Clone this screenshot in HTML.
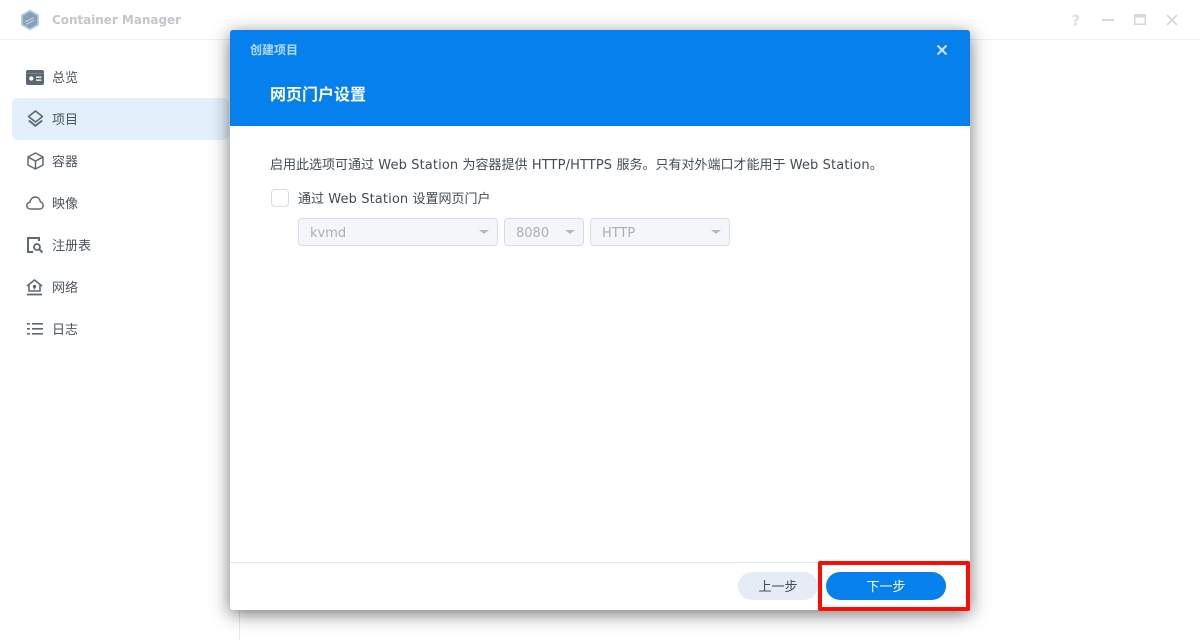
<!DOCTYPE html>
<html lang="zh-CN">
<head>
<meta charset="utf-8">
<title>Container Manager</title>
<style>
html,body{margin:0;padding:0;width:1200px;height:640px;overflow:hidden;background:#fff}
*{box-sizing:border-box}
body{font-family:"DejaVu Sans","Noto Sans CJK SC",sans-serif;font-size:13px;color:#414b55;position:relative}
.abs{position:absolute;white-space:nowrap}
.nav{position:absolute;left:52px;font-size:13px;line-height:18px;color:#414b55;opacity:.95}
.l{letter-spacing:.12px}
svg{position:absolute;overflow:visible}
.sel{position:absolute;top:218px;height:28px;border:1px solid #d5dfea;border-radius:4px;background:#f4f6fa;color:#a9b0b8;font-size:13px;line-height:30px;padding-left:11px}
.sel i{position:absolute;top:11px;width:0;height:0;border-left:5px solid transparent;border-right:5px solid transparent;border-top:4px solid #b4bac1}
</style>
</head>
<body>
<!-- window chrome -->
<div class="abs" style="left:0;top:39px;width:1200px;height:1px;background:#f0f2f5"></div>
<div class="abs" style="left:239px;top:40px;width:1px;height:600px;background:#e6e9ed"></div>

<svg style="left:19px;top:9px" width="22" height="22" viewBox="0 0 22 22">
<path d="M11 0.5 20 5.700V16.300L11 21.500 2 16.300V5.700Z" fill="#a9d4ef"/>
<path d="M11 2.500 18.200 6.800V15.200L11 19.500 3.800 15.200V6.800Z" fill="#8b9db9"/>
<path d="M6 13 15 8.500M7 15.500 15.500 11" stroke="#b7d2e4" stroke-width="1.200" fill="none"/>
</svg>
<div class="abs" style="left:52px;top:11px;font-size:12px;line-height:18px;font-weight:700;color:#c3c6ca;letter-spacing:-.04px">Container Manager</div>

<svg style="left:1070px;top:12px" width="14" height="16" viewBox="0 0 14 16"><text x="1.500" y="13.500" font-family="DejaVu Sans" font-size="15" font-weight="700" fill="#dfe1e4">?</text></svg>
<svg style="left:1102px;top:19px" width="12" height="2" viewBox="0 0 12 2"><rect width="12" height="2" fill="#d6d8db"/></svg>
<svg style="left:1134px;top:14px" width="12" height="11" viewBox="0 0 12 11"><rect x=".75" y=".75" width="10.500" height="9.500" fill="none" stroke="#d6d8db" stroke-width="1.500"/><rect x="0" y="0" width="12" height="3.500" fill="#d6d8db"/></svg>
<svg style="left:1166px;top:14px" width="12" height="12" viewBox="0 0 12 12"><path d="M1 1 11 11M11 1 1 11" stroke="#d6d8db" stroke-width="1.800" fill="none"/></svg>

<!-- sidebar -->
<div class="abs" style="left:12px;top:98px;width:217px;height:42px;border-radius:6px;background:#e3f0fc"></div>

<svg style="left:26px;top:70px" width="18" height="15" viewBox="0 0 18 15"><rect width="18" height="15" rx="2" fill="#5c6670"/><rect x="0" y="3" width="18" height="1" fill="#7c858e"/><circle cx="5.300" cy="8.500" r="2.100" fill="#fff"/><rect x="10" y="6.500" width="5.500" height="1.300" fill="#fff"/><rect x="10" y="9.500" width="5.500" height="1.300" fill="#fff"/></svg>
<div class="nav" style="top:70px">总览</div>

<svg style="left:27px;top:110px" width="17" height="17" viewBox="0 0 17 17" fill="none" stroke="#5f6973" stroke-width="1.600"><path d="M8.500 1 15.500 6.500 8.500 12 1.500 6.500Z" stroke-linejoin="round"/><path d="M1.800 10.500 8.500 15.800 15.200 10.500" stroke-width="1.900"/></svg>
<div class="nav" style="top:112px">项目</div>

<svg style="left:27px;top:152px" width="17" height="18" viewBox="0 0 17 18" fill="none" stroke="#5f6973" stroke-width="1.500"><path d="M8.500 1 16 5V13L8.500 17 1 13V5Z" stroke-linejoin="round"/><path d="M1.500 5.300 8.500 9 15.500 5.300M8.500 9V16.500"/></svg>
<div class="nav" style="top:154px">容器</div>

<svg style="left:26px;top:196px" width="18" height="14" viewBox="0 0 18 14" fill="none" stroke="#5f6973" stroke-width="1.500"><path d="M4.500 13C2.300 13 .8 11.500 .8 9.600 .8 7.800 2.200 6.400 3.900 6.300 4.400 3.200 6.600 1 9.300 1 12 1 14 3 14.400 5.900 16 6.300 17.200 7.800 17.200 9.500 17.200 11.500 15.700 13 13.700 13Z"/></svg>
<div class="nav" style="top:196px">映像</div>

<svg style="left:27px;top:237px" width="17" height="17" viewBox="0 0 17 17" fill="none" stroke="#5f6973"><path d="M10 1H1V15H6" stroke-width="2"/><path d="M1 1H12V4" stroke-width="2"/><circle cx="10" cy="10" r="3" stroke-width="1.800"/><path d="M12.300 12.300 15.500 15.500" stroke-width="2"/></svg>
<div class="nav" style="top:238px">注册表</div>

<svg style="left:26px;top:279px" width="17" height="17" viewBox="0 0 17 17" fill="none" stroke="#5f6973" stroke-width="1.600"><path d="M1 7 8.500 1 16 7"/><path d="M3 6V12H14V6"/><circle cx="8.500" cy="7.500" r="1.700" fill="#5f6973" stroke="none"/><rect x="7.800" y="7.500" width="1.400" height="3" fill="#5f6973" stroke="none"/><path d="M1 15.500H16" stroke-width="1.800"/></svg>
<div class="nav" style="top:280px">网络</div>

<svg style="left:27px;top:323px" width="16" height="12" viewBox="0 0 16 12" fill="#5f6973"><rect x="0" y="0" width="3" height="1.600"/><rect x="0" y="5" width="3" height="1.600"/><rect x="0" y="10" width="3" height="1.600"/><rect x="5" y="0" width="11" height="1.600"/><rect x="5" y="5" width="11" height="1.600"/><rect x="5" y="10" width="11" height="1.600"/></svg>
<div class="nav" style="top:322px">日志</div>

<!-- modal -->
<div class="abs" style="left:230px;top:30px;width:740px;height:580px;background:#fff;border-radius:3px;box-shadow:0 4px 18px rgba(0,0,0,.55);overflow:hidden">
  <div style="position:absolute;left:0;top:0;width:740px;height:96px;background:#0580ed"></div>
  <div class="abs" style="left:20px;top:11px;font-size:12px;line-height:18px;font-weight:700;color:#b4dafa;font-family:'Noto Sans CJK SC',sans-serif">创建项目</div>
  <div class="abs" style="left:40px;top:52px;font-size:16px;line-height:22px;font-weight:700;color:#fff;font-family:'Noto Sans CJK SC',sans-serif">网页门户设置</div>
  <svg style="left:707px;top:15px" width="10" height="10" viewBox="0 0 10 10"><path d="M.5 .5 9.500 9.500M9.500 .5 .5 9.500" stroke="#cfe6fb" stroke-width="2" fill="none"/></svg>

  <div class="abs" style="left:40px;top:127px;font-size:13px;line-height:18px;color:#414b55">启用此选项可通过<span class="l"> Web Station </span>为容器提供<span class="l"> HTTP/HTTPS </span>服务。只有对外端口才能用于<span class="l"> Web Station</span>。</div>

  <div class="abs" style="left:41px;top:159px;width:18px;height:18px;border:1px solid #d5dfea;border-radius:4px;background:#fff"></div>
  <div class="abs" style="left:68px;top:161px;font-size:13px;line-height:18px;color:#414b55">通过<span class="l"> Web Station </span>设置网页门户</div>

  <div class="abs" style="left:0;top:532px;width:740px;height:1px;background:#e2e8ef"></div>
  <div class="abs" style="left:508px;top:542px;width:80px;height:28px;border-radius:14px;background:#e6ecf5;color:#414b55;font-size:13px;line-height:32px;text-align:center">上一步</div>
  <div class="abs" style="left:596px;top:542px;width:120px;height:28px;border-radius:14px;background:#0580ed;color:#fff;font-size:13px;line-height:32px;text-align:center">下一步</div>
</div>

<div class="sel" style="left:298px;width:200px">kvmd<i style="left:180px"></i></div>
<div class="sel" style="left:504px;width:80px">8080<i style="left:60px"></i></div>
<div class="sel" style="left:590px;width:140px">HTTP<i style="left:120px"></i></div>

<!-- red highlight -->
<div class="abs" style="left:818px;top:561px;width:152px;height:50px;border:4px solid #fb0d05;border-radius:2px"></div>
</body>
</html>
